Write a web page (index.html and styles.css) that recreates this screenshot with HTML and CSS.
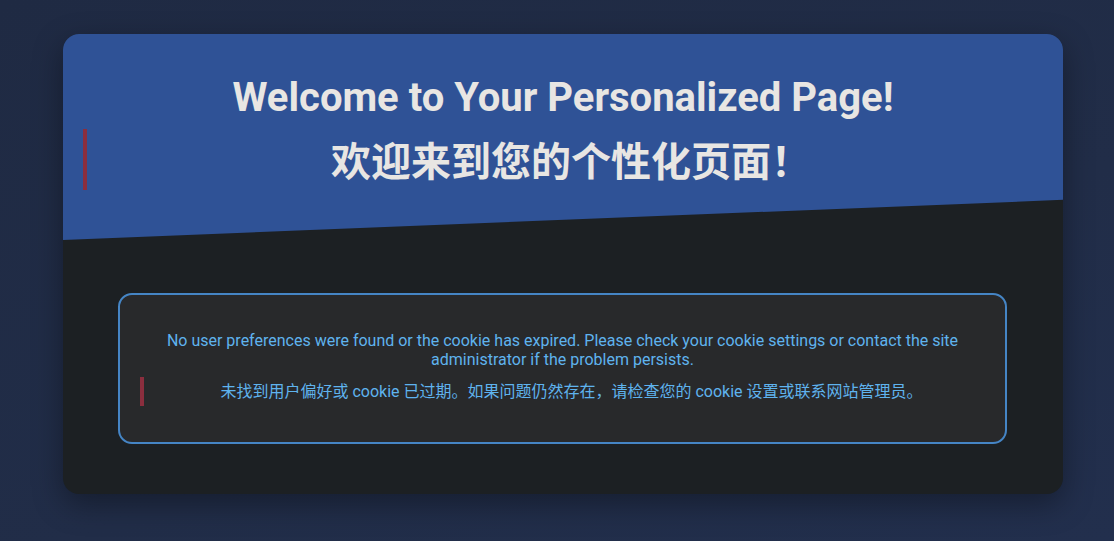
FILE: index.html
```html
<!DOCTYPE html>
<html lang="en">
<head>
    <meta charset="UTF-8">
    <meta name="viewport" content="width=device-width, initial-scale=1.0">
    <title>Personalized Page</title>
    <link rel="stylesheet" href="styles.css">
</head>
<body>
    <div class="page">
        <div class="card">
            <header class="hero">
                <h1 class="title">Welcome to Your Personalized Page!</h1>
                <h1 class="title title-zh" lang="zh">欢迎来到您的个性化页面！</h1>
            </header>
            <main class="content">
                <div class="notice">
                    <p class="notice-en">No user preferences were found or the cookie has expired. Please check your cookie settings or contact the site administrator if the problem persists.</p>
                    <p class="notice-zh" lang="zh">未找到用户偏好或 cookie 已过期。如果问题仍然存在，请检查您的 cookie 设置或联系网站管理员。</p>
                </div>
            </main>
        </div>
    </div>
</body>
</html>
```

FILE: styles.css
```css
html, body {
    height: 100%;
}

body {
    margin: 0;
    font-family: Roboto, "Noto Sans CJK SC", sans-serif;
    background: linear-gradient(160deg, #1f2a43 0%, #212d48 60%, #222f4d 100%);
    color: #e8e6e3;
}

.page {
    padding: 34px 51px 0 63px;
}

.card {
    max-width: 1000px;
    background: #1c2023;
    border-radius: 16px;
    overflow: hidden;
    box-shadow: 0 10px 30px rgba(0, 0, 0, 0.35);
}

.hero {
    background: #2f5296;
    padding: 40px 20px 50px;
    clip-path: polygon(0 0, 100% 0, 100% 80.5%, 0 100%);
}

.title {
    margin: 0;
    text-align: center;
    font-size: 40px;
    font-weight: 700;
    line-height: 48px;
    color: #e8e6e3;
}

.title-zh {
    margin-top: 7px;
    padding-left: 12px;
    font-family: "Noto Sans CJK SC", sans-serif;
    line-height: 61px;
    border-left: 4px solid #8b2e3e;
}

.content {
    padding: 53px 56px 50px 55px;
}

.notice {
    background: #28292b;
    border: 2px solid #4585c5;
    border-radius: 14px;
    padding: 28px 20px;
    text-align: center;
    color: #5fb3ee;
    font-size: 16px;
}

.notice p {
    margin: 8px 0;
}

.notice-en {
    line-height: 19px;
}

.notice-zh {
    font-family: Roboto, "Noto Sans CJK SC", sans-serif;
    line-height: 23px;
    padding: 3px 0 3px 14px;
    border-left: 4px solid #8b2e3e;
}
```
